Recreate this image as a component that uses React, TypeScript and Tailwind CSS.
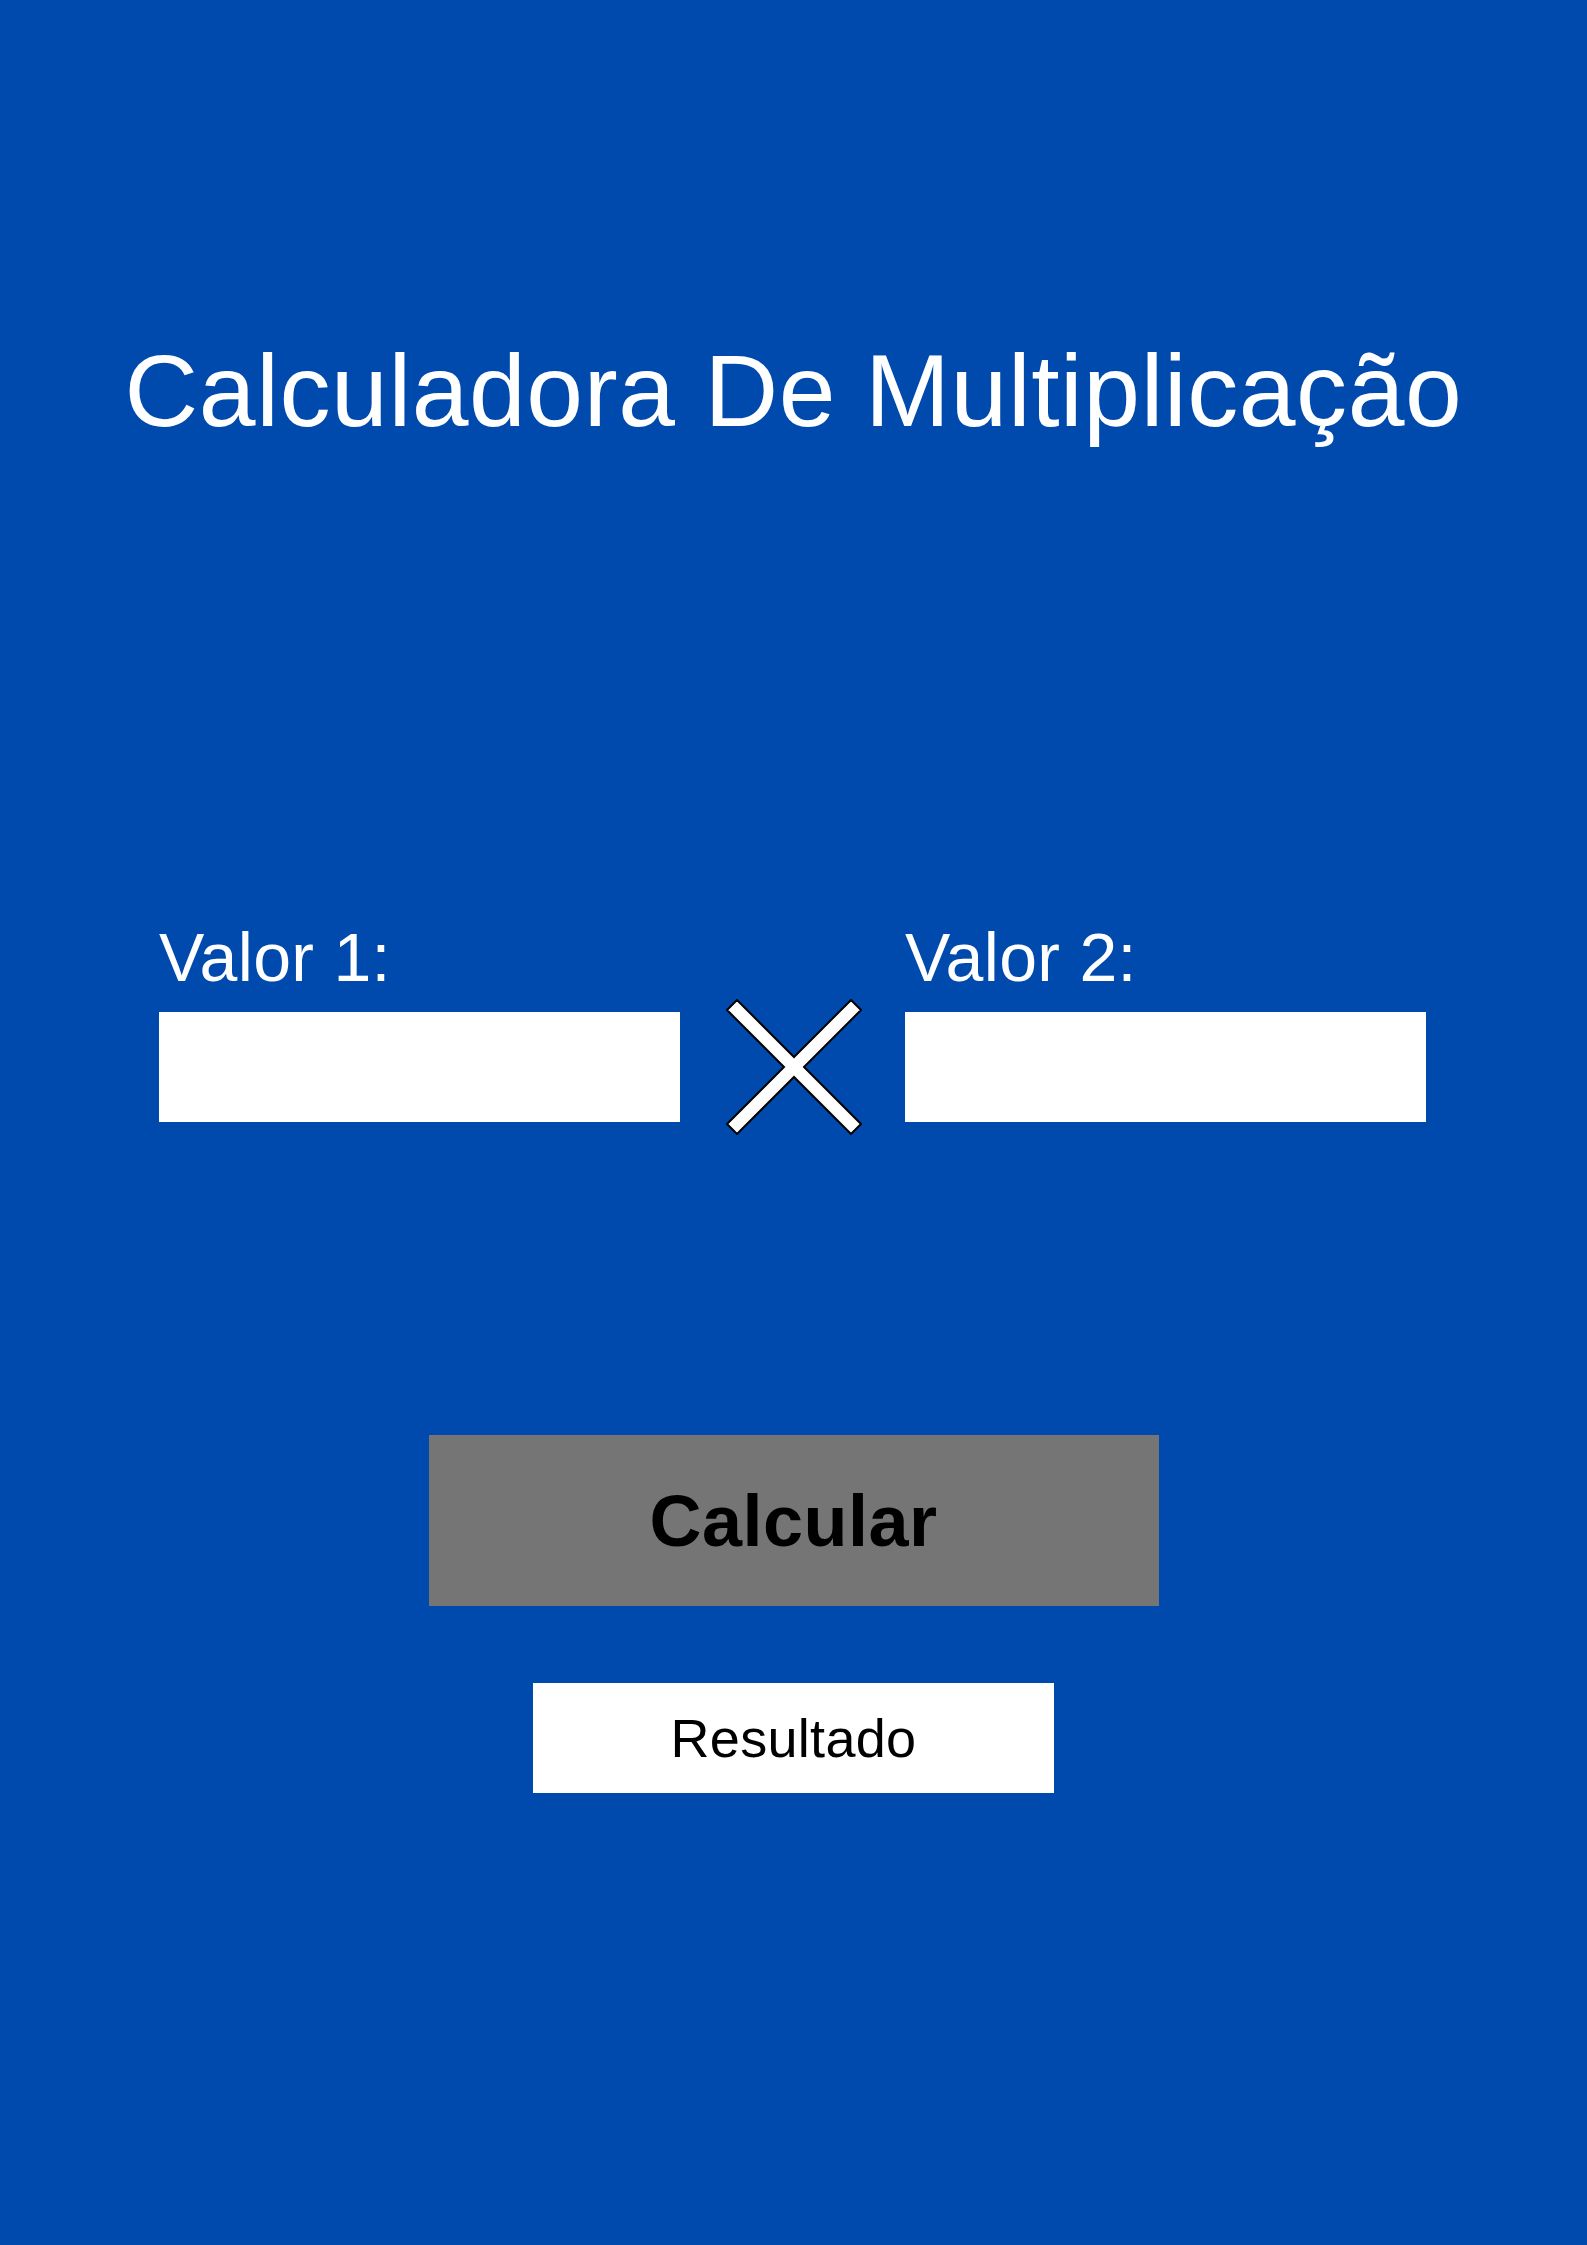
import { useState } from 'react';

function TimesIcon() {
  return (
    <svg width="136" height="136" viewBox="0 0 136 136" className="ml-[3px] shrink-0">
      <polygon
        points="1,11 11,1 68,58 125,1 135,11 78,68 135,125 125,135 68,78 11,135 1,125 58,68"
        fill="#ffffff"
        stroke="#000000"
        strokeWidth="2"
        strokeLinejoin="miter"
      />
    </svg>
  );
}

export default function App() {
  const [valor1, setValor1] = useState('');
  const [valor2, setValor2] = useState('');
  const [resultado, setResultado] = useState<string | null>(null);

  function handleCalcular() {
    const a = parseFloat(valor1.replace(',', '.'));
    const b = parseFloat(valor2.replace(',', '.'));
    if (isNaN(a) || isNaN(b)) {
      setResultado(null);
      return;
    }
    setResultado(String(a * b));
  }

  return (
    <div className="flex min-h-[2245px] w-full flex-col items-center bg-[#004aad] font-['Liberation_Sans',Arial,sans-serif]">
      <h1 className="mt-[340px] text-[102px] font-normal leading-none tracking-[0.6px] text-white">
        Calculadora De Multiplicação
      </h1>

      <div className="mt-[481px] w-[1267px] self-start ml-[159px]">
        <div className="flex justify-between">
          <label htmlFor="valor1" className="w-[521px] text-[68px] leading-none tracking-[0.3px] text-white">
            Valor 1:
          </label>
          <label htmlFor="valor2" className="w-[521px] text-[68px] leading-none tracking-[0.3px] text-white">
            Valor 2:
          </label>
        </div>
        <div className="mt-[8px] flex items-center justify-between">
          <input
            id="valor1"
            value={valor1}
            onChange={(e) => setValor1(e.target.value)}
            className="h-[110px] w-[521px] bg-white px-4 text-[54px] text-black outline-none"
          />
          <TimesIcon />
          <input
            id="valor2"
            value={valor2}
            onChange={(e) => setValor2(e.target.value)}
            className="h-[110px] w-[521px] bg-white px-4 text-[54px] text-black outline-none"
          />
        </div>
      </div>

      <button
        type="button"
        onClick={handleCalcular}
        className="mt-[300px] flex h-[171px] w-[730px] items-center justify-center bg-[#757575] text-[72px] font-bold tracking-[0.5px] text-black"
      >
        Calcular
      </button>

      <div className="mt-[77px] flex h-[110px] w-[521px] items-center justify-center bg-white text-[54px] tracking-[0.3px] text-black">
        {resultado ?? 'Resultado'}
      </div>
    </div>
  );
}
